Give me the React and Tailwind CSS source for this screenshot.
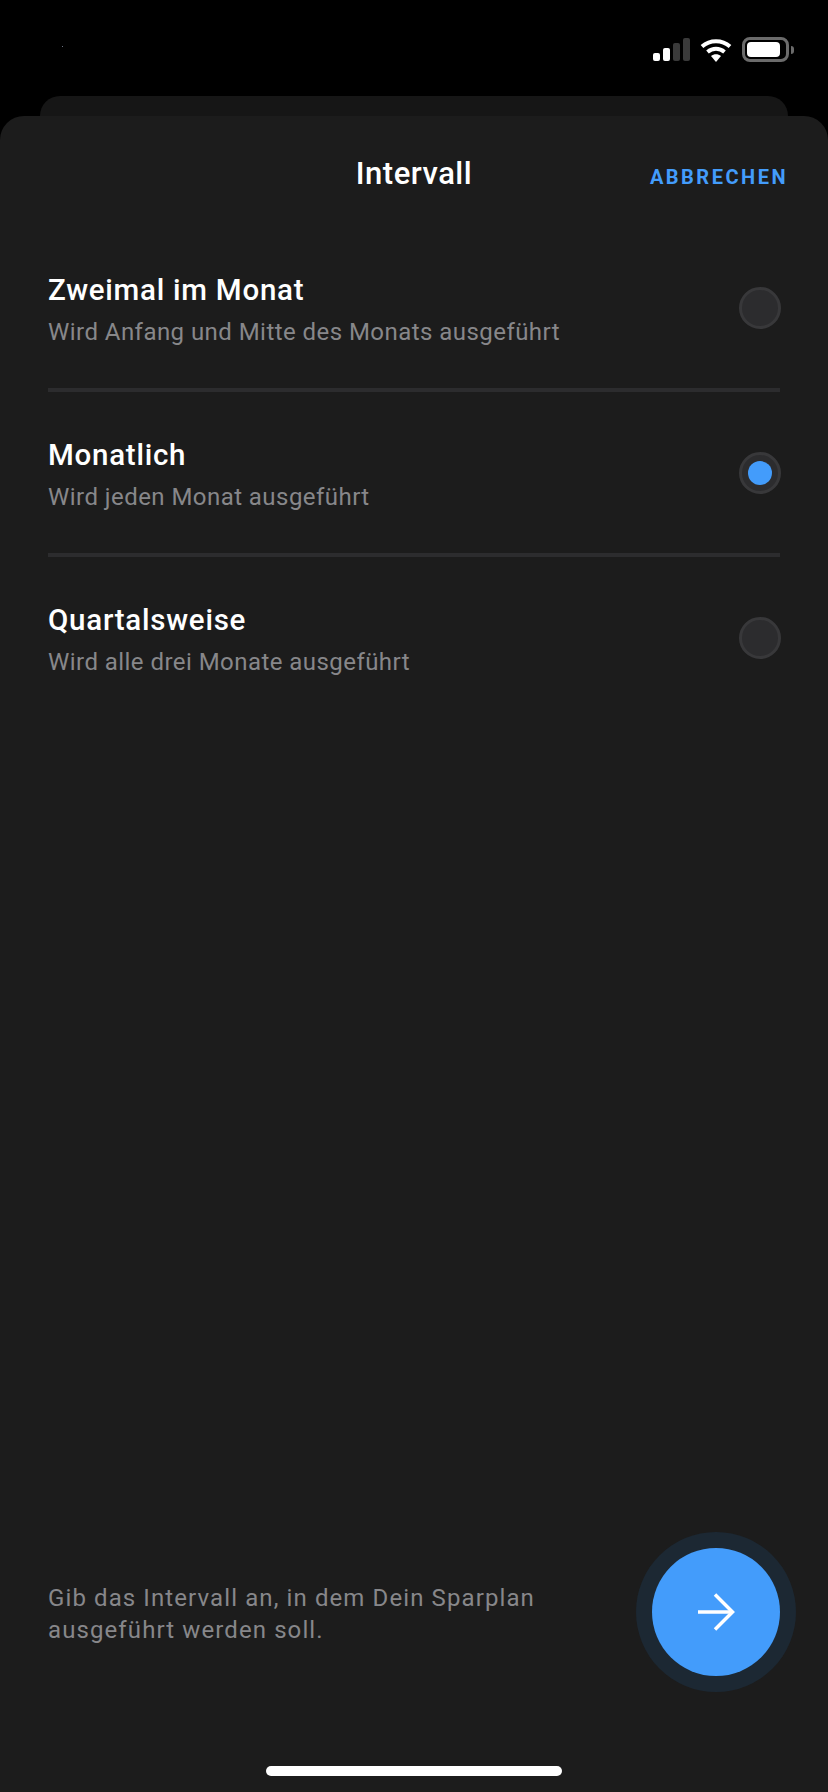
const options = [
  { title: "Zweimal im Monat", text: "Wird Anfang und Mitte des Monats ausgeführt" },
  { title: "Monatlich", text: "Wird jeden Monat ausgeführt", selected: true },
  { title: "Quartalsweise", text: "Wird alle drei Monate ausgeführt" },
];

function StatusBar() {
  return (
    <div className="h-[96px] flex justify-between items-start pl-[62px] pr-[34px] pt-[37px]">
      <div className="w-px h-px mt-[9px] bg-gray-500" />
      <div className="flex items-center">
        <div className="flex items-end gap-[3px] h-[23px] mr-[10px]">
          <div className="w-[7px] h-[8px] rounded-[2px] bg-white" />
          <div className="w-[7px] h-[13px] rounded-[2px] bg-white" />
          <div className="w-[7px] h-[18px] rounded-[2px] bg-[#3a3a3a]" />
          <div className="w-[7px] h-[23px] rounded-[2px] bg-[#3a3a3a]" />
        </div>
        <svg width="32" height="24" viewBox="0 0 32 24" className="mr-[10px]">
          <path d="M2 8.5C10 1.5 22 1.5 30 8.5" fill="none" stroke="white" strokeWidth="4" />
          <path d="M7.5 14C12.5 9.8 19.5 9.8 24.5 14" fill="none" stroke="white" strokeWidth="4" />
          <path d="M11 18L16 24L21 18C18 15.6 14 15.6 11 18Z" fill="white" />
        </svg>
        <div className="w-[47px] h-[25px] rounded-[8px] border-[3px] border-[#6b6b6b] p-[2px]">
          <div className="w-[33px] h-full rounded-[4px] bg-white" />
        </div>
        <div className="w-[3px] h-[8px] ml-[2px] rounded-r-full bg-[#6b6b6b]" />
      </div>
    </div>
  );
}

function OptionRow({ title, text, selected, last }) {
  return (
    <div className={`flex items-center justify-between ${last ? "h-[161px]" : "h-[165px] border-b-[4px] border-[#2c2c2e]"}`}>
      <div className="pt-[4px]">
        <div className="text-[29.5px] leading-[36px] font-medium text-white tracking-[0.75px]">{title}</div>
        <div className="mt-[8px] text-[24px] leading-[32px] text-[#87878a] tracking-[0.45px]">{text}</div>
      </div>
      <div className="w-[42px] h-[42px] -mr-px rounded-full border-[3px] border-[#38383a] bg-[#2c2c2e] flex items-center justify-center">
        {selected && <div className="w-[24px] h-[24px] rounded-full bg-[#439cfb]" />}
      </div>
    </div>
  );
}

export default function App() {
  return (
    <div className="w-[828px] h-[1792px] flex flex-col bg-black font-['Roboto',sans-serif]">
      <StatusBar />
      <div className="h-[20px] mx-[40px] rounded-t-[20px] bg-[#161616]" />
      <div className="flex-1 flex flex-col rounded-t-[24px] bg-[#1c1c1c] px-[48px]">
        <div className="h-[111px] pt-[37px] relative">
          <div className="text-center text-[31px] leading-[42px] font-medium text-white tracking-[0.5px]">Intervall</div>
          <div className="absolute right-[-8px] top-[46px] text-[20px] leading-[30px] font-bold text-[#439cfb] tracking-[2.5px]">ABBRECHEN</div>
        </div>
        <div>
          {options.map((o, i) => (
            <OptionRow key={o.title} {...o} last={i === options.length - 1} />
          ))}
        </div>
        <div className="flex-1" />
        <div className="flex items-center justify-between h-[128px]">
          <div className="pt-[4px] text-[24px] leading-[32px] text-[#87878a] tracking-[1.1px]">
            Gib das Intervall an, in dem Dein Sparplan
            <br />
            ausgeführt werden soll.
          </div>
          <button className="w-[128px] h-[128px] rounded-full bg-[#439cfb] ring-[16px] ring-[#1c2833] flex items-center justify-center">
            <svg width="38" height="38" viewBox="0 0 38 38" fill="none" stroke="white" strokeWidth="3.5">
              <path d="M1 19H36" />
              <path d="M18 1.5L35.5 19L18 36.5" />
            </svg>
          </button>
        </div>
        <div className="h-[116px] flex items-end justify-center pb-[16px]">
          <div className="w-[296px] h-[10px] rounded-full bg-white" />
        </div>
      </div>
    </div>
  );
}
